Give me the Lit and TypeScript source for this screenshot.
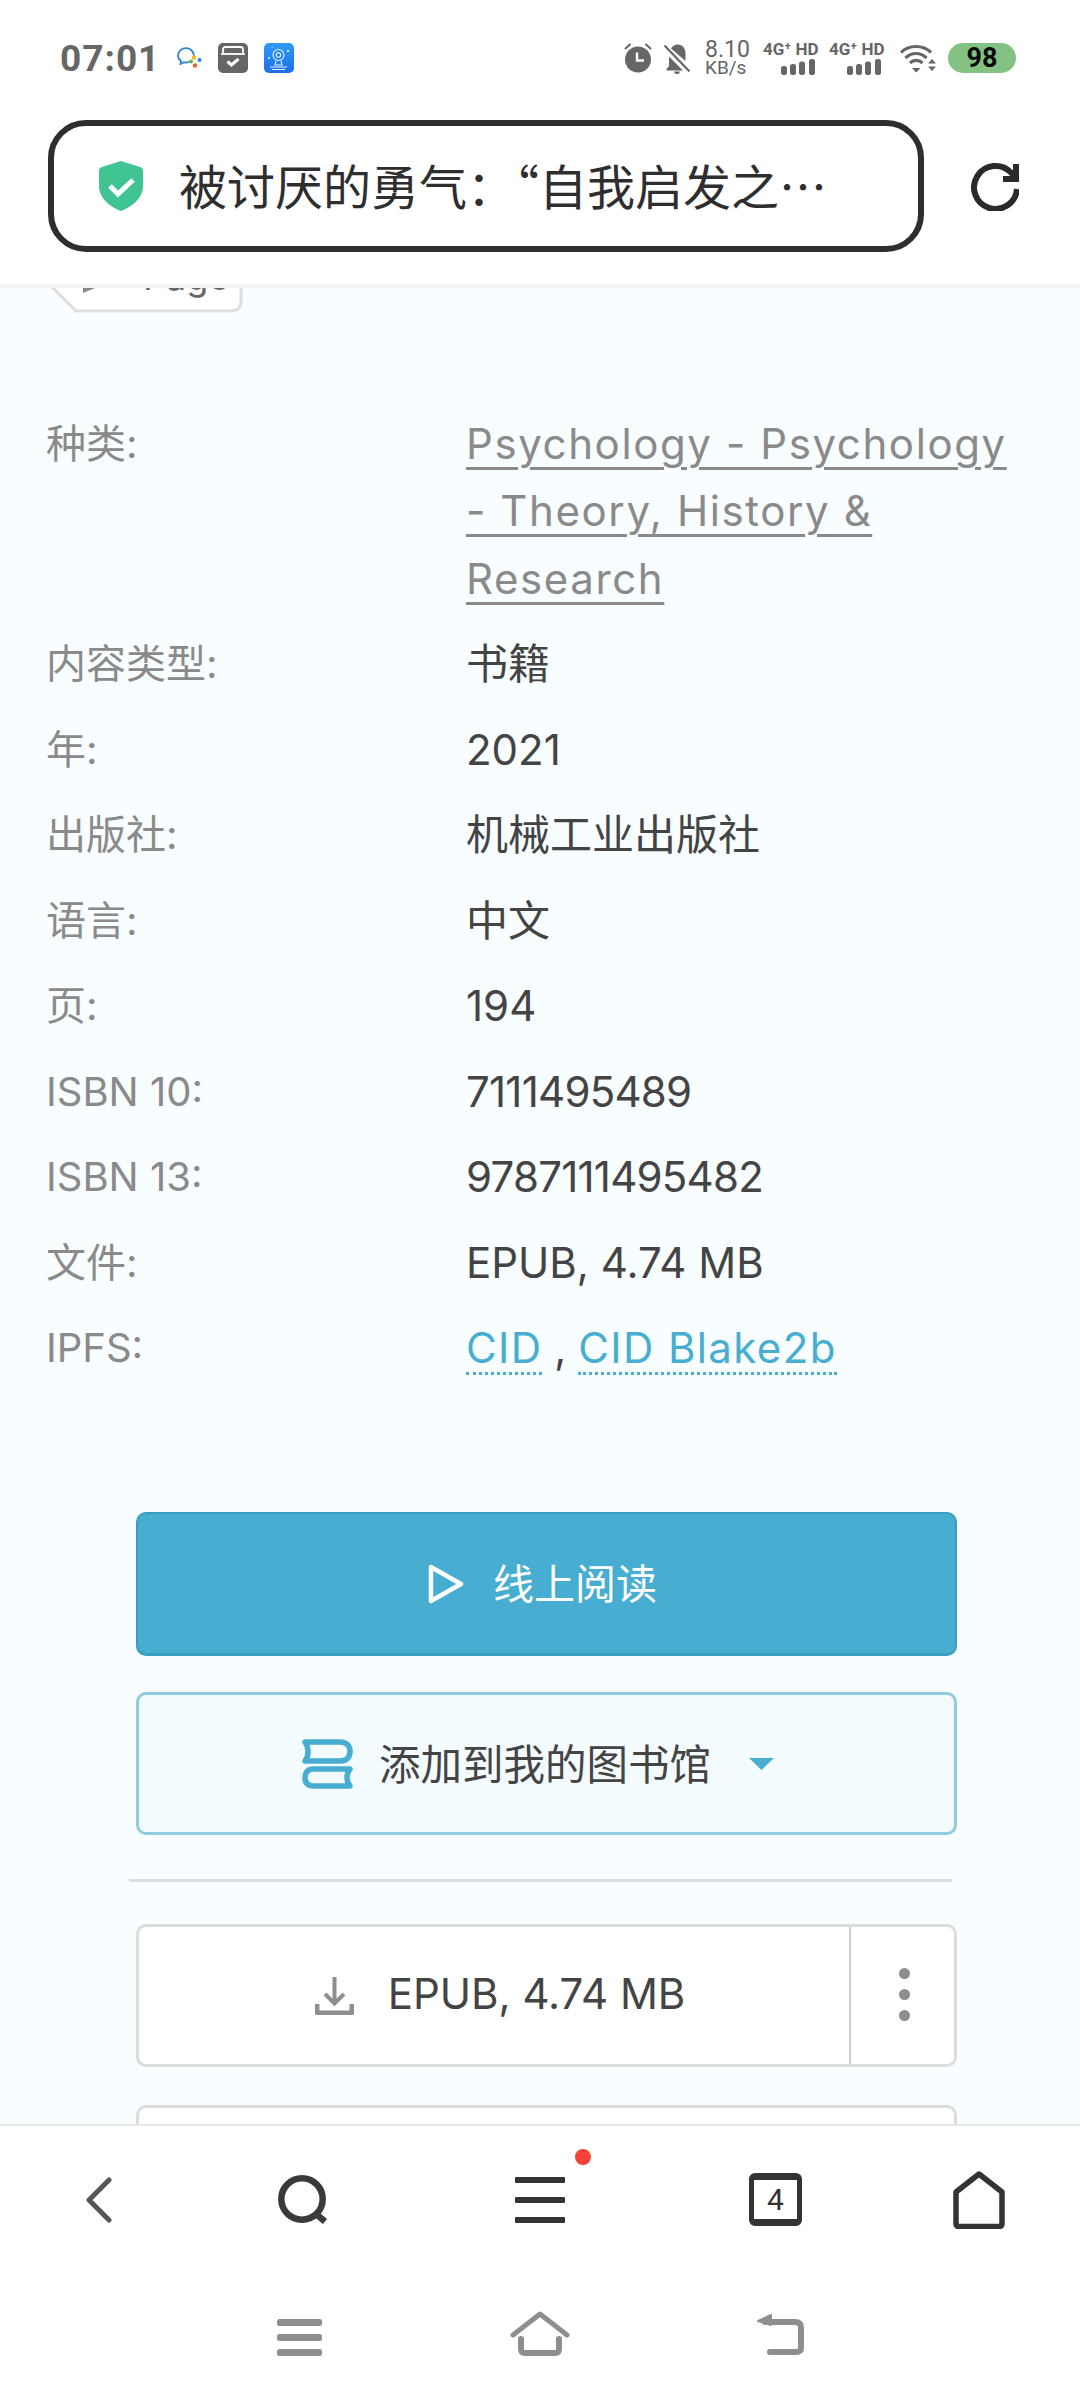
import { LitElement, html, css } from "lit";
import { customElement } from "lit/decorators.js";

const rows: [string, string][] = [
  ["内容类型:", "书籍"],
  ["年:", "2021"],
  ["出版社:", "机械工业出版社"],
  ["语言:", "中文"],
  ["页:", "194"],
  ["ISBN 10:", "7111495489"],
  ["ISBN 13:", "9787111495482"],
  ["文件:", "EPUB, 4.74 MB"],
];

@customElement("app-root")
export class AppRoot extends LitElement {
  static styles = css`
    :host { display: block; width: 1080px; height: 2400px; overflow: hidden; background: #fff;
      font-family: Inter, "Noto Sans CJK SC", sans-serif; }
    .page { display: flex; flex-direction: column; height: 2400px; }
    .top { flex: none; height: 284px; background: #fff; border-bottom: 4px solid #f3f5f5; position: relative; z-index: 2; box-sizing: content-box; }
    .status { height: 116px; display: flex; align-items: center; padding: 0 64px 0 60px; box-sizing: border-box; color: #666; }
    .time { font: 700 37px Roboto, sans-serif; letter-spacing: 1px; color: #666; width: 117px; }
    .status svg { display: block; flex: none; }
    .left { display: flex; align-items: center; gap: 16px; }
    .right { margin-left: auto; display: flex; align-items: center; }
    .speed { width: 58px; margin-left: 14px; display: flex; flex-direction: column; color: #666; }
    .speed b { font: 400 23px/20px Roboto, sans-serif; }
    .speed small { font: 400 19px/16px Roboto, sans-serif; }
    .net { width: 66px; display: flex; flex-direction: column; align-items: stretch; }
    .net span { font: 700 17px/15px Roboto, sans-serif; color: #666; white-space: nowrap; }
    .net svg { margin: 2px 0 0 18px; }
    .battery { width: 68px; height: 30px; margin-left: 11px; border-radius: 15px; background: #84c283; color: #0a0a0a; font: 700 27px/30px Roboto, sans-serif; text-align: center; }
    .bell { margin-left: 10px; }
    .wifi { margin-left: 5px; }
    .addr { height: 132px; display: flex; align-items: center; padding: 4px 0 0 48px; }
    .urlbox { width: 876px; height: 132px; box-sizing: border-box; border: 6px solid #2e2e2e; border-radius: 38px; display: flex; align-items: center; padding-left: 44px; }
    .urltext { margin-left: 35px; padding-bottom: 4px; font: 400 48px/60px "Noto Sans CJK SC", sans-serif; color: #2e2e2e; white-space: nowrap; }
    .refresh { margin-left: 47px; }
    .main { flex: 1; min-height: 0; overflow: hidden; background: #f8fdff; }
    .tag { margin: -32px 0 0 40px; width: 210px; height: 58px; }
    .tag text { font: 400 36px Inter, sans-serif; fill: #666; }
    .info { margin-top: 95.5px; padding: 0 46px; display: flex; flex-direction: column; gap: 18px; font-size: 42px; line-height: 67.5px; color: #444; }
    .row { display: grid; grid-template-columns: 420px 1fr; }
    .k { color: #8a8a8a; font-size: 40px; }
    .link { color: #8a8a8a; letter-spacing: 1.6px; text-decoration: underline; text-underline-offset: 8px; text-decoration-thickness: 3px; }
    .num { letter-spacing: -0.75px; }
    .cid { display: inline-block; line-height: 48px; color: #47aed1; letter-spacing: 1.4px; border-bottom: 3px dotted #47aed1; }
    .btns { margin: 130.5px 123px 0 136px; display: flex; flex-direction: column; }
    .btn { height: 144px; box-sizing: border-box; border-radius: 10px; display: flex; align-items: center; justify-content: center; font: 400 41.5px "Noto Sans CJK SC", sans-serif; }
    .read { background: #47aed1; border: 2px solid #3b9dbd; border-bottom-width: 3px; color: #fff; gap: 29px; padding-right: 8px; font-size: 41px; }
    .read span { padding-bottom: 6px; }
    .add { height: 143px; margin-top: 36px; background: #f3fbfe; border: 3px solid #8fcbdf; color: #444; gap: 26px; padding-right: 17px; }
    .add span { padding-bottom: 3px; }
    .add .caret { margin-left: 12px; }
    .divider { height: 3px; background: #dcdede; margin: 44px 5px 0 -7px; }
    .dl { height: 143px; margin-top: 42px; background: #fff; border: 3px solid #dcdcdc; display: flex; color: #444; justify-content: flex-start; }
    .dl .main-part { flex: 1; display: flex; align-items: center; justify-content: center; gap: 34px; height: 100%; padding-left: 12px; font: 400 42px Inter, sans-serif; border-right: 2px solid #d0d0d0; }
    .dl .main-part span { padding-bottom: 4px; }
    .dl .more { width: 103px; box-sizing: border-box; padding: 0 0 3px 3px; display: flex; flex-direction: column; align-items: center; justify-content: center; gap: 10px; }
    .dl .more i { display: block; width: 11px; height: 11px; border-radius: 50%; background: #8e8e8e; }
    .next { height: 143px; margin-top: 38px; background: #fff; border: 3px solid #dcdcdc; }
    .nav { flex: none; height: 276px; background: #fff; border-top: 2px solid #e6e8e8; box-sizing: border-box; position: relative; z-index: 2; }
    .tools { height: 147px; display: grid; grid-template-columns: 191px 238px 234px 204px 52px; align-items: center; padding-left: 86px; box-sizing: border-box; }
    .menu { position: relative; width: 50px; }
    .dot { position: absolute; width: 16px; height: 16px; border-radius: 50%; background: #f44336; top: -28px; right: -26px; }
    .tab { width: 53px; height: 53px; box-sizing: border-box; border: 5px solid #333; border-top-width: 7px; border-bottom-width: 7px; border-radius: 6px; display: flex; align-items: center; justify-content: center; font: 400 30px/1 "Roboto", sans-serif; color: #333; }
    .sys { display: grid; grid-template-columns: 233px 245px 50px; align-items: start; padding: 38px 0 0 277px; }
    .sys .m { margin-top: 8px; }
    .sys .b { margin-top: 1px; }
    svg { display: block; flex: none; }
  `;

  render() {
    const bars = html`<svg width="35" height="16" viewBox="0 0 35 16" fill="#666"><rect x="0" y="7" width="6" height="9" rx="2.5"/><rect x="9" y="5" width="6" height="11" rx="2.5"/><rect x="18" y="2.5" width="6" height="13.5" rx="2.5"/><rect x="28" y="0" width="6" height="16" rx="2.5"/></svg>`;
    return html`<div class="page">
      <div class="top">
        <div class="status">
          <div class="time">07:01</div>
          <div class="left">
            <svg width="25" height="22" viewBox="0 0 25 22" fill="none">
              <path d="M16.500 11.500C18 5 13.500 1.200 9 1.200 4.500 1.200 1 4.500 1 8.500c0 2.300 1.100 4.200 3 5.400L3.500 17l3.600-1.700c.7.1 1.300.2 1.900.2 1 0 1.900-.1 2.600-.4" stroke="#2a87d6" stroke-width="1.8" stroke-linecap="round"/>
              <circle cx="17" cy="10.5" r="2.200" fill="#f4c020"/><circle cx="22.500" cy="13" r="2" fill="#2a87d6"/><circle cx="18" cy="18.500" r="2.200" fill="#e8622c"/><circle cx="14" cy="14.500" r="2" fill="#5fb548"/>
            </svg>
            <svg width="30" height="30" viewBox="0 0 30 30">
              <rect width="30" height="30" rx="5" fill="#666"/>
              <path d="M5 11V6.500A2.500 2.500 0 0 1 7.500 4h15A2.500 2.500 0 0 1 25 6.500V11" fill="none" stroke="#fff" stroke-width="1.8"/>
              <rect x="3" y="10" width="24" height="2" fill="#fff" opacity=".9"/>
              <path d="M9.500 18.500l4 3.500 7-6" fill="none" stroke="#fff" stroke-width="3"/>
            </svg>
            <svg width="30" height="30" viewBox="0 0 30 30">
              <defs><linearGradient id="b" x1="0" y1="0" x2="0" y2="1"><stop offset="0" stop-color="#2f9bf5"/><stop offset="1" stop-color="#1c6ee8"/></linearGradient></defs>
              <rect width="30" height="30" rx="5" fill="url(#b)"/>
              <g fill="none" stroke="#e8f4ff" stroke-width="1.1">
                <circle cx="14.500" cy="12" r="5.500"/><circle cx="14.500" cy="12" r="2.200"/>
                <path d="M12 18l-1 4h7l-1-4M6 24h17M8 26.500h13"/>
              </g>
              <circle cx="24" cy="8" r="1.100" fill="#fff"/><circle cx="5" cy="15" r=".9" fill="#fff"/><circle cx="8" cy="4" r=".6" fill="#fff"/>
            </svg>
          </div>
          <div class="right">
            <svg width="30" height="30" viewBox="0 0 30 30" fill="#666">
              <circle cx="15" cy="16.500" r="13"/>
              <path d="M2.500 5.500L7 1.500M27.500 5.500L23 1.500" stroke="#666" stroke-width="2" stroke-linecap="round"/>
              <path d="M14 9.500v8h7" fill="none" stroke="#fff" stroke-width="2.400"/>
            </svg>
            <svg class="bell" width="28" height="31" viewBox="0 0 28 31" fill="#666">
              <path d="M8 5.500C10 2.500 12 1.500 14.500 1.500c5.500 0 8 4.500 8 9v7.500zM5 12.500l15 15H3.500v-1.500L6 23v-8c0-1 0-1.700-1-2.500zM11 28.500h6c-.5 2-1.500 2.500-3 2.500s-2.500-.5-3-2.500z"/>
              <path d="M1.500 2.500l25 26" stroke="#666" stroke-width="2.200"/>
            </svg>
            <div class="speed"><b>8.10</b><small>KB/s</small></div>
            <div class="net"><span>4G⁺ HD</span>${bars}</div>
            <div class="net"><span>4G⁺ HD</span>${bars}</div>
            <svg class="wifi" width="37" height="30" viewBox="0 0 37 30" fill="none" stroke="#666" stroke-width="3.200">
              <path d="M1 9.500C9 1.500 23 1.500 31 9.500M5.500 15c6-6 15-6 21 0M10 20c3.500-3.500 9-3.500 12.500 0"/>
              <path d="M12 25h8.500l-4.250 4.500z" fill="#666" stroke="none"/>
              <path d="M28 20.500h8l-4-4.500zM28 23.500h8l-4 4.500z" fill="#666" stroke="none"/>
            </svg>
            <div class="battery">98</div>
          </div>
        </div>
        <div class="addr">
          <div class="urlbox">
            <svg width="46" height="50" viewBox="0 0 44 50"><path d="M22 0l19 6c2 .6 3 2 3 4v15c0 12-11 21-22 25C11 46 0 37 0 25V10c0-2 1-3.400 3-4z" fill="#40c494"/><path d="M11 25l8 8 15-14" fill="none" stroke="#fff" stroke-width="5"/></svg>
            <div class="urltext">被讨厌的勇气：“自我启发之…</div>
          </div>
          <svg class="refresh" width="48" height="50" viewBox="0 0 48 50" fill="none">
            <path d="M46 28a21.500 21.500 0 1 1-6-16.500L46 17" stroke="#2a2a2a" stroke-width="6"/>
            <path d="M45 3v15H32" stroke="#2a2a2a" stroke-width="6"/>
          </svg>
        </div>
      </div>

      <div class="main">
        <svg class="tag" viewBox="0 0 210 58">
          <path d="M0 19L36 55H190Q201 55 201 45V0" fill="#fff" stroke="#dedede" stroke-width="3"/>
          <path d="M43 22L55 32L43 37z" fill="#888"/>
          <text x="103" y="34">Page</text>
        </svg>
        <div class="info">
          <div class="row"><div class="k">种类:</div><div><span class="link">Psychology - Psychology - Theory, History &amp; Research</span></div></div>
          ${rows.map(([k, v]) => html`<div class="row"><div class="k">${k}</div><div class=${/^\d{10,}$/.test(v) ? "num" : ""}>${v}</div></div>`)}
          <div class="row"><div class="k">IPFS:</div><div><span class="cid">CID</span> , <span class="cid">CID Blake2b</span></div></div>
        </div>
        <div class="btns">
          <div class="btn read">
            <svg width="36" height="40" viewBox="0 0 36 40" fill="none"><path d="M3 3l30 17L3 37z" stroke="#fff" stroke-width="4.500" stroke-linejoin="round"/></svg>
            <span>线上阅读</span>
          </div>
          <div class="btn add">
            <svg width="51" height="50" viewBox="0 0 51 50" fill="none" stroke="#47aed1" stroke-width="5.500" stroke-linejoin="round" stroke-linecap="round"><path d="M3 3H38C45 3 48 7 48 12.500S45 22 38 22H3C7 17 7 8 3 3z"/><path d="M48 30H12C5 30 3 34 3 38.500S5 47 12 47H48C44 42 44 35 48 30z"/></svg>
            <span>添加到我的图书馆</span>
            <svg class="caret" width="25" height="12" viewBox="0 0 25 12"><path d="M0 0h25L12.500 12z" fill="#47aed1"/></svg>
          </div>
          <div class="divider"></div>
          <div class="btn dl">
            <div class="main-part">
              <svg width="39" height="38" viewBox="0 0 39 38" fill="none" stroke="#8e8e8e" stroke-width="4"><path d="M19.500 0v26M10 17l9.500 9.500L29 17"/><path d="M2 27v7.500c0 1 .5 1.500 1.500 1.500h32c1 0 1.500-.5 1.500-1.500V27" stroke-width="5"/></svg>
              <span>EPUB, 4.74 MB</span>
            </div>
            <div class="more"><i></i><i></i><i></i></div>
          </div>
          <div class="btn next"></div>
        </div>
      </div>

      <div class="nav">
        <div class="tools">
          <svg width="26" height="46" viewBox="0 0 26 46" fill="none" stroke="#555" stroke-width="5" stroke-linecap="round" stroke-linejoin="round"><path d="M23 3L3 23l20 20"/></svg>
          <svg width="54" height="54" viewBox="0 0 54 54" fill="none" stroke="#3a3a3a" stroke-width="6.500"><circle cx="25" cy="26" r="20.700"/><path d="M39 41l9 7.500"/></svg>
          <div class="menu">
            <svg width="50" height="46" viewBox="0 0 50 46" fill="#333"><rect y="0" width="50" height="6" rx="1"/><rect y="20" width="50" height="6" rx="1"/><rect y="40" width="50" height="6" rx="1"/></svg>
            <div class="dot"></div>
          </div>
          <div class="tab">4</div>
          <svg width="52" height="58" viewBox="0 0 52 58" fill="none" stroke="#333" stroke-width="5.500" stroke-linejoin="round"><path d="M26 3L49 21v32c0 1.500-1 2.500-2.500 2.500h-41C4 55.500 3 54.500 3 53V21z"/></svg>
        </div>
        <div class="sys">
          <svg class="m" width="45" height="38" viewBox="0 0 45 38" fill="#8e8e8e"><rect y="0" width="45" height="7" rx="2.500"/><rect y="15" width="45" height="7" rx="2.500"/><rect y="30" width="45" height="7" rx="2.500"/></svg>
          <svg width="60" height="46" viewBox="0 0 60 46" fill="none" stroke="#8e8e8e" stroke-linecap="round" stroke-linejoin="round"><path d="M3 24L30 3l27 21" stroke-width="5"/><path d="M11 28v10q0 4 4 4h30q4 0 4-4V28" stroke-width="6"/></svg>
          <svg class="b" width="50" height="44" viewBox="0 0 50 44" fill="none" stroke-linecap="round" stroke-linejoin="round"><path d="M3 9L16 3v10z" fill="#8e8e8e" stroke="#8e8e8e" stroke-width="2"/><path d="M10 10H40q6 0 6 6V36q0 4-5 4H15" stroke="#8e8e8e" stroke-width="6"/></svg>
        </div>
      </div>
    </div>`;
  }
}
